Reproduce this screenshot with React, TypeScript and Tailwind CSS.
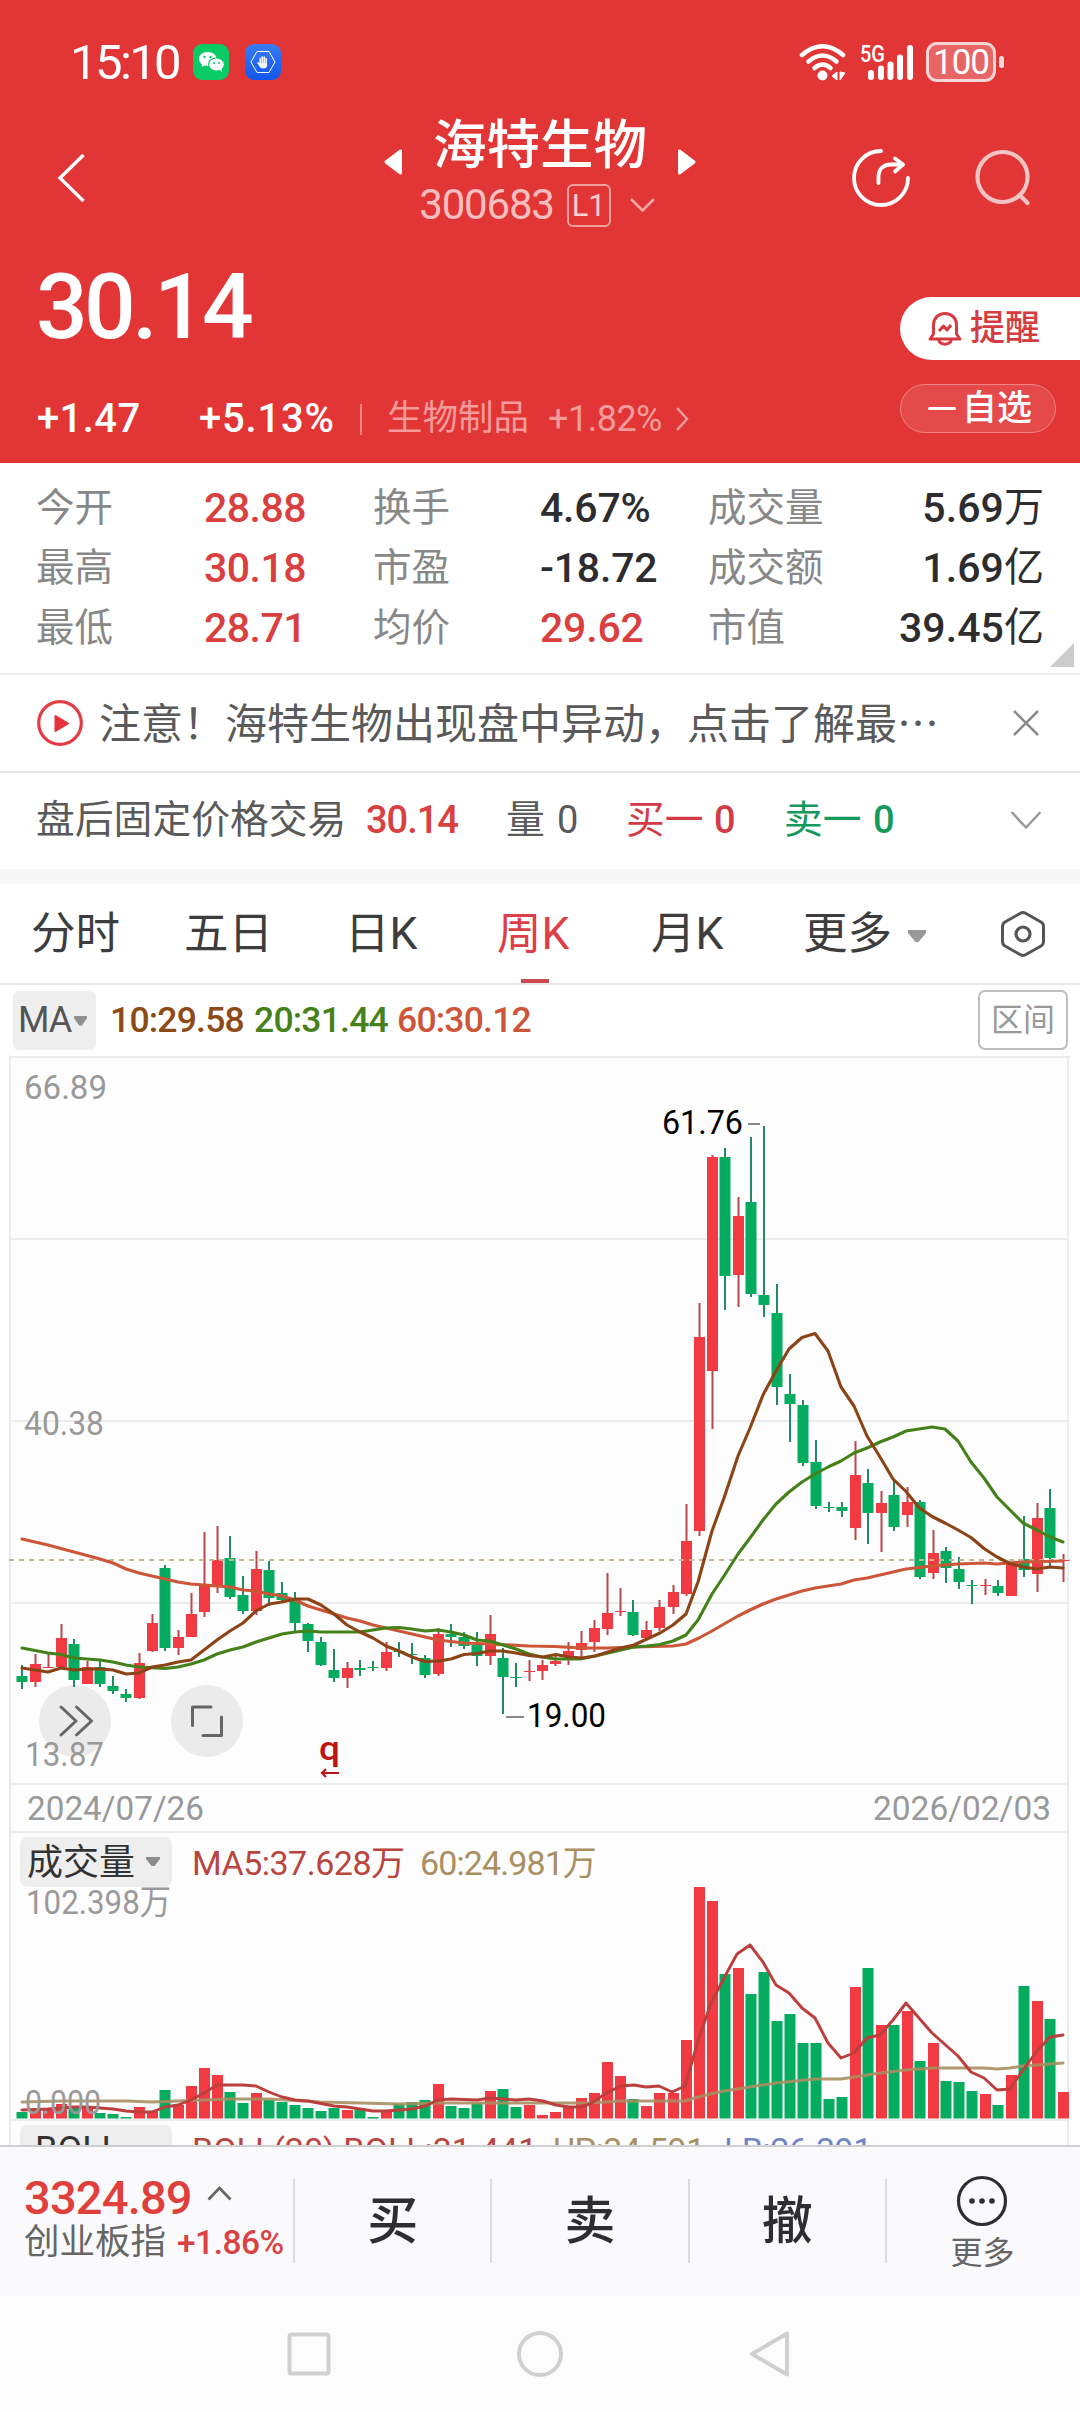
import type { ReactNode } from "react";

type Color = "r" | "g";

// [color, high, body top, body bottom, low, volume top]
type Candle = [Color, number, number, number, number, number];

const CANDLES: Candle[] = [
  ["g", 1665, 1676, 1682, 1689, 2112],
  ["r", 1654, 1664, 1682, 1687, 2109],
  ["r", 1654, 1667, 1668, 1668, 2109],
  ["r", 1624, 1638, 1667, 1669, 2104],
  ["g", 1639, 1644, 1680, 1687, 2108],
  ["r", 1661, 1667, 1684, 1684, 2108],
  ["g", 1661, 1667, 1684, 1687, 2113],
  ["g", 1676, 1686, 1691, 1694, 2114],
  ["g", 1689, 1694, 1698, 1702, 2117],
  ["r", 1653, 1663, 1698, 1699, 2107],
  ["r", 1614, 1623, 1651, 1652, 2111],
  ["g", 1565, 1568, 1648, 1651, 2090],
  ["r", 1630, 1637, 1648, 1655, 2105],
  ["r", 1593, 1614, 1637, 1637, 2086],
  ["r", 1532, 1584, 1612, 1617, 2068],
  ["r", 1526, 1560, 1587, 1593, 2075],
  ["g", 1536, 1558, 1597, 1599, 2092],
  ["g", 1576, 1595, 1611, 1614, 2103],
  ["r", 1551, 1569, 1611, 1615, 2093],
  ["g", 1561, 1570, 1598, 1606, 2100],
  ["g", 1582, 1593, 1600, 1602, 2102],
  ["g", 1592, 1600, 1623, 1631, 2105],
  ["g", 1623, 1624, 1641, 1652, 2108],
  ["g", 1637, 1642, 1665, 1666, 2111],
  ["g", 1649, 1670, 1678, 1682, 2108],
  ["r", 1662, 1668, 1678, 1688, 2110],
  ["g", 1660, 1668, 1670, 1676, 2110],
  ["g", 1661, 1667, 1668, 1671, 2117],
  ["r", 1642, 1652, 1668, 1671, 2111],
  ["g", 1642, 1651, 1652, 1657, 2104],
  ["g", 1643, 1654, 1655, 1664, 2102],
  ["g", 1655, 1658, 1675, 1678, 2100],
  ["r", 1628, 1634, 1674, 1676, 2084],
  ["g", 1624, 1634, 1637, 1647, 2106],
  ["g", 1632, 1637, 1646, 1649, 2108],
  ["g", 1632, 1645, 1656, 1666, 2103],
  ["r", 1615, 1634, 1656, 1665, 2091],
  ["g", 1648, 1658, 1677, 1714, 2089],
  ["g", 1663, 1677, 1678, 1687, 2107],
  ["r", 1660, 1671, 1672, 1681, 2105],
  ["r", 1660, 1665, 1671, 1680, 2115],
  ["r", 1654, 1661, 1664, 1666, 2112],
  ["r", 1642, 1651, 1657, 1665, 2107],
  ["r", 1631, 1643, 1650, 1658, 2098],
  ["r", 1620, 1628, 1642, 1652, 2093],
  ["r", 1573, 1613, 1629, 1635, 2062],
  ["r", 1588, 1611, 1612, 1616, 2076],
  ["g", 1600, 1612, 1635, 1636, 2099],
  ["r", 1621, 1630, 1638, 1640, 2106],
  ["r", 1600, 1607, 1628, 1631, 2093],
  ["r", 1585, 1592, 1607, 1614, 2093],
  ["r", 1504, 1541, 1594, 1596, 2040],
  ["r", 1303, 1337, 1531, 1536, 1887],
  ["r", 1155, 1157, 1371, 1429, 1901],
  ["g", 1148, 1157, 1276, 1310, 1974],
  ["r", 1197, 1216, 1275, 1307, 1968],
  ["g", 1137, 1202, 1294, 1297, 1994],
  ["g", 1126, 1295, 1305, 1317, 1972],
  ["g", 1284, 1313, 1387, 1405, 2021],
  ["g", 1374, 1394, 1404, 1442, 2014],
  ["g", 1400, 1405, 1463, 1466, 2043],
  ["g", 1440, 1462, 1506, 1509, 2043],
  ["g", 1502, 1507, 1508, 1512, 2099],
  ["g", 1502, 1507, 1511, 1517, 2097],
  ["r", 1441, 1475, 1528, 1540, 1987],
  ["g", 1469, 1483, 1513, 1544, 1968],
  ["r", 1491, 1503, 1513, 1552, 2025],
  ["g", 1481, 1495, 1527, 1531, 2025],
  ["r", 1487, 1502, 1515, 1527, 2011],
  ["g", 1500, 1502, 1577, 1579, 2061],
  ["r", 1530, 1553, 1573, 1579, 2043],
  ["g", 1547, 1551, 1568, 1583, 2081],
  ["g", 1557, 1569, 1582, 1589, 2082],
  ["g", 1580, 1585, 1586, 1604, 2091],
  ["r", 1579, 1585, 1586, 1595, 2094],
  ["g", 1580, 1586, 1593, 1596, 2105],
  ["r", 1563, 1563, 1596, 1596, 2075],
  ["g", 1516, 1559, 1570, 1577, 1986],
  ["r", 1503, 1518, 1574, 1592, 2001],
  ["g", 1489, 1508, 1558, 1567, 2019],
  ["r", 1554, 1560, 1561, 1582, 2092],
];

const MA10 =
  "22,1668 35,1670 48,1672 61,1668 74,1670 87,1669 100,1669 113,1670 126,1674 139,1673 152,1667 165,1665 178,1662 191,1660 204,1650 217,1640 230,1631 243,1623 256,1611 269,1604 282,1602 295,1599 308,1599 321,1605 334,1614 347,1625 360,1632 373,1638 386,1646 399,1651 412,1657 425,1661.5 439,1661 451,1659 464,1654.5 477,1653.5 490,1651 503,1651 516,1653 529,1655.5 543,1657 556,1654.5 569,1657 582,1658 595,1656 608,1652 621,1648 634,1645 647,1639 660,1633 673,1625 686,1614 698,1582 712,1531 724,1498 738,1456 750,1428 763,1395 776,1371 789,1349 802,1337.5 815,1333.5 828,1351 841,1387 854,1406 867,1436 880,1457 893,1479 906,1491.5 919,1507.5 932,1516.5 945,1523 958,1530 971,1537.5 984,1548.5 997,1557 1010,1563.5 1023,1567 1037,1569 1050,1567 1063,1568";
const MA20 =
  "22,1648 35,1650.5 48,1653 61,1654.5 74,1658 100,1660 113,1662 126,1665 139,1667 165,1668.5 178,1667 191,1664 204,1660 217,1654 230,1650 243,1647 256,1642 269,1638 282,1634 295,1632 308,1631 321,1632 360,1632 373,1630 386,1628 399,1627.5 412,1629 425,1631 438,1630 451,1632 464,1635 477,1640 490,1641 503,1645 516,1649 529,1654 542,1657 555,1659 580,1659 595,1656 608,1653 621,1650 634,1647 647,1646 660,1644.5 673,1641 686,1635 698,1620 712,1594 724,1576 738,1554 750,1538 763,1520 776,1504 789,1492 802,1482 815,1474 828,1467 841,1461 854,1453 867,1448 880,1442 893,1437 906,1431 932,1427 945,1429 958,1441 971,1462 984,1478 997,1497 1010,1510 1023,1523 1037,1530 1050,1537 1063,1542";
const MA60 =
  "22,1539 48,1545 74,1552 100,1559 113,1563 126,1569 139,1573 152,1576 165,1579 178,1582 191,1584 217,1586 230,1587 243,1590 256,1591 269,1594 282,1596 295,1600 308,1606 321,1610 334,1614 347,1618 360,1621 373,1625 386,1628 412,1634 438,1640 464,1643 490,1644 529,1646 555,1646.5 582,1648 608,1648 634,1647 673,1646 686,1644 699,1638 712,1631 724,1624 738,1616 750,1610 763,1604 776,1599 802,1591 815,1588 841,1584 854,1580 867,1578 906,1569 932,1566 958,1564 984,1563 997,1564 1023,1562 1063,1561";
const VOL_MA5 =
  "22,2110 48,2109 74,2107 87,2107 100,2108 113,2109 126,2111 139,2112 152,2112 165,2107 178,2105 191,2100 204,2093 217,2085 243,2085 256,2086 269,2092 282,2097 295,2100 308,2101 334,2106 347,2107 373,2111 386,2111 412,2109 425,2106 438,2100 451,2099 477,2100 490,2098 503,2099 516,2100 529,2099 543,2101 556,2105 569,2107 580,2107 590,2104 608,2092 621,2086 634,2085 646,2087 659,2086 672,2092 685,2086 698,2041 711,2003 724,1978 737,1954 750,1945 763,1962 776,1985 789,1993 802,2008 815,2018 828,2043 841,2058 854,2053 867,2038 880,2035 893,2020 906,2003 932,2033 958,2056 971,2072 984,2078 997,2090 1010,2089 1023,2070 1037,2051 1050,2037 1063,2035";
const VOL_MA60 =
  "22,2102 61,2101 126,2101 152,2102 178,2101 204,2100 230,2099 269,2099 320,2102 400,2104 440,2103 590,2103 620,2101 660,2101 685,2101 698,2097 711,2094 724,2091 750,2087 776,2083 815,2079 841,2079 867,2075 880,2073 906,2070 932,2068 984,2068 997,2069 1010,2068 1023,2066 1063,2063";

const candleX = (i: number, c: Color) => Math.round(22 + i * 13.01) + (c === "r" ? 0.5 : 0);
const bodyFill = (c: Color) => (c === "r" ? "#f23a43" : "#05ab5f");
const wickFill = (c: Color) => (c === "r" ? "#b9484c" : "#238a61");

interface LabelProps {
  x: number;
  y: number;
  w: number;
  size?: number;
  fill?: string;
  weight?: number;
  children: string;
}

function Label({ x, y, w, size = 34, fill = "#999", weight = 400, children }: LabelProps) {
  return (
    <text x={x} y={y} fontSize={size} fill={fill} fontWeight={weight} textLength={w} lengthAdjust="spacingAndGlyphs">
      {children}
    </text>
  );
}

function StatusBar() {
  return (
    <div className="flex h-[124px] items-center pl-[70px] text-white">
      <span className="w-[123px] text-[49px] leading-none tracking-[-2.6px]">15:10</span>
      <svg width="36" height="36" viewBox="0 0 36 36">
        <rect width="36" height="36" rx="9" fill="#08cb66" />
        <path d="M14.5 8C9.500 8 6 11.200 6 15c0 2.200 1.200 4 3 5.300L8.500 23l3-1.600c1 .3 2 .4 3 .4h.8c-1-4.800 3-8.500 8-8.400C22.500 10.200 19 8 14.500 8z" fill="#fff" />
        <ellipse cx="23.500" cy="20.500" rx="7.300" ry="6" fill="#fff" />
        <path d="M26 25l3 3-.5-4z" fill="#fff" />
        <g fill="#08cb66">
          <circle cx="11.500" cy="13" r="1.200" />
          <circle cx="17.500" cy="13" r="1.200" />
          <circle cx="21" cy="19" r="1" />
          <circle cx="26" cy="19" r="1" />
        </g>
      </svg>
      <svg className="ml-4" width="36" height="36" viewBox="0 0 36 36">
        <defs>
          <linearGradient id="guard" x1="0" y1="0" x2="0" y2="1">
            <stop offset="0" stopColor="#3b7bf2" />
            <stop offset="1" stopColor="#1257ec" />
          </linearGradient>
        </defs>
        <rect width="36" height="36" rx="9" fill="url(#guard)" />
        <path d="M12 7.500h12L30 18l-6 10.500H12L6 18z" fill="none" stroke="#fff" strokeWidth="1" />
        <path d="M15.200 14.500v6M17.200 13v7M19.200 13v7M21.200 14.500v6" stroke="#fff" strokeWidth="1.500" strokeLinecap="round" />
        <path d="M12 18.700l1.500-.5 1.500 1h7v2.300c0 1.500-1 2.700-2.300 2.700h-2.600c-1 0-1.800-.6-2.300-1.500z" fill="#fff" />
      </svg>

      <svg className="ml-[518px]" width="48" height="37" viewBox="0 0 48 37">
        <g fill="none" stroke="#fff" strokeWidth="4.500" strokeLinecap="round">
          <path d="M3 11Q23.500-6.500 44 11" />
          <path d="M9.500 17.500Q23.500 5.500 37.500 17.500" />
          <path d="M15.500 24Q23.500 17 31.500 24" />
        </g>
        <circle cx="23.500" cy="31.500" r="5" fill="#fff" />
        <path d="M38 28v8l-5-4zM41 36v-8l5 1z" fill="#fff" stroke="#fff" strokeWidth="1" />
      </svg>
      <svg className="ml-3 overflow-visible" width="56" height="37" viewBox="0 0 56 37">
        <text x="1" y="17.500" fontSize="24" fontWeight="500" fill="#fff" textLength="25" lengthAdjust="spacingAndGlyphs">
          5G
        </text>
        <g stroke="#fff" strokeWidth="6" strokeLinecap="round">
          <path d="M12 29v4M22 24.500v8.500M31.500 20.500v12.500M41 13.500v19.500M51 4v29" />
        </g>
      </svg>
      <div className="ml-[11px] flex h-[40px] w-[70px] items-center justify-center rounded-[11px] border-[3px] border-[#f9d6d6] bg-[#e86565] text-[35px] leading-none tracking-[-1px]">
        100
      </div>
      <div className="ml-[3px] h-3 w-[5px] rounded-full bg-[#fbdada]" />
    </div>
  );
}

function TitleBar() {
  return (
    <div className="flex h-[122px] text-white">
      <svg className="mt-[29px] ml-[57px]" width="30" height="50" viewBox="0 0 30 50">
        <path d="M26.500 2L3 25l23.500 23" fill="none" stroke="#fff" strokeWidth="3.400" />
      </svg>
      <svg className="mt-6 ml-[296px]" width="20" height="28" viewBox="0 0 20 28">
        <path d="M17.500 3v22L3 14z" fill="#fff" stroke="#fff" strokeWidth="3" strokeLinejoin="round" />
      </svg>
      <div className="flex w-[274px] flex-col items-center">
        <div className="mt-[-5px] h-[60px] text-[53.500px] leading-[54px] font-medium whitespace-nowrap">海特生物</div>
        <div className="mt-[4px] flex h-[44px] items-center">
          <span className="ml-[-5px] text-[42px] leading-none tracking-[-1.2px] text-[#f9bfbf]">300683</span>
          <span className="ml-[13px] flex h-[43px] w-[44px] items-center justify-center rounded-[6px] border-2 border-[#f4a0a0] text-[31px] leading-none text-[#fbd0d0]">
            L1
          </span>
          <svg className="ml-[18px]" width="27" height="16" viewBox="0 0 27 16">
            <path d="M2 2l11.500 11.500L25 2" fill="none" stroke="#f5a9a9" strokeWidth="2.500" />
          </svg>
        </div>
      </div>
      <svg className="mt-6" width="20" height="28" viewBox="0 0 20 28">
        <path d="M2.500 3v22L17 14z" fill="#fff" stroke="#fff" strokeWidth="3" strokeLinejoin="round" />
      </svg>
      <svg className="mt-6 ml-[153px]" width="60" height="60" viewBox="0 0 60 60">
        <g fill="none" stroke="#fff" strokeWidth="3.800" strokeLinecap="round" strokeLinejoin="round">
          <path d="M31 3A27 27 0 1 0 58 30" />
          <path d="M28.500 35v-6c0-8 5-12.500 12-12.500h12" />
          <path d="M45 10.500l8 6-8 7" />
        </g>
      </svg>
      <svg className="mt-6 ml-[63px]" width="60" height="60" viewBox="0 0 60 60">
        <circle cx="29.500" cy="29" r="25" fill="none" stroke="#f4c3c3" strokeWidth="4.200" />
        <path d="M46.500 47l8 8" stroke="#f4c3c3" strokeWidth="4.200" strokeLinecap="round" />
      </svg>
    </div>
  );
}

function Quote() {
  return (
    <div className="flex h-[217px] justify-between text-white">
      <div>
        <div className="mt-[11px] ml-[36px] h-[110px] text-[91px] leading-[100px] font-medium tracking-[-3.6px]">30.14</div>
        <div className="mt-[31px] flex h-[42px] items-center leading-none whitespace-nowrap">
          <span className="ml-[37px] w-[162px] text-[40px] font-medium tracking-[0.4px]">+1.47</span>
          <span className="w-[161px] text-[40px] font-medium tracking-[0.8px]">+5.13%</span>
          <span className="h-[31px] w-[2px] bg-[#ef8585]" />
          <span className="ml-[25px] w-[161px] text-[35.500px] text-[#f49b9b]">生物制品</span>
          <span className="w-[127px] text-[36px] tracking-[-0.5px] text-[#f49b9b]">+1.82%</span>
          <svg width="14" height="26" viewBox="0 0 14 26">
            <path d="M2 2l10 11L2 24" fill="none" stroke="#f49b9b" strokeWidth="2.500" />
          </svg>
        </div>
      </div>
      <div className="w-[180px]">
        <div className="mt-[51px] flex h-[63px] items-center rounded-l-full bg-white pl-[28px] text-[#d43c40]">
          <svg width="34" height="36" viewBox="0 0 34 36">
            <g fill="none" stroke="#d43c40" strokeWidth="3" strokeLinejoin="round">
              <path d="M5.500 23V14C5.500 7 10.500 2.500 17 2.500S28.500 7 28.500 14v9l3.500 5H2z" />
              <path d="M10.500 29c2 5.500 11 5.500 13 0" />
              <path d="M11 20l4.500-5 3.500 4 4-5" />
            </g>
          </svg>
          <span className="ml-[8px] text-[35px] leading-none font-medium">提醒</span>
        </div>
        <div className="mt-6 flex h-[49px] w-[156px] items-center rounded-full border-[1.500px] border-[#f28484] bg-[#e54a4b] pl-[27px]">
          <span className="h-[3px] w-7 rounded bg-white" />
          <span className="ml-[6px] text-[35px] leading-none font-medium">自选</span>
        </div>
      </div>
    </div>
  );
}

const STATS = [
  ["今开", "28.88", "换手", "4.67%", "成交量", "5.69万"],
  ["最高", "30.18", "市盈", "-18.72", "成交额", "1.69亿"],
  ["最低", "28.71", "均价", "29.62", "市值", "39.45亿"],
];

function Stats() {
  return (
    <div className="relative h-[212px] border-b-2 border-[#ebebeb] pt-[15px]">
      {STATS.map((row, i) => (
        <div key={row[0]} className="flex h-[60px] items-center pr-[36px] pl-[36px] text-[38.500px] leading-none whitespace-nowrap text-[#888]">
          <span className="w-[168px]">{row[0]}</span>
          <span className="w-[169px] text-[41px] font-medium tracking-[-0.5px] text-[#d9403f]">{row[1]}</span>
          <span className="w-[167px]">{row[2]}</span>
          <span className={`w-[168px] text-[41px] font-medium tracking-[-0.2px] ${i === 2 ? "text-[#d9403f]" : "text-[#2d2d2f]"}`}>
            {row[3]}
          </span>
          <span>{row[4]}</span>
          <span className="ml-auto flex items-center text-[#2d2d2f]">
            <span className="text-[41px] font-medium tracking-[0.1px]">{row[5].slice(0, -1)}</span>
            <span className="text-[40px]">{row[5].slice(-1)}</span>
          </span>
        </div>
      ))}
      <svg className="absolute right-[6px] bottom-[6px]" width="24" height="24" viewBox="0 0 24 24">
        <path d="M24 0v24H0z" fill="#ccc" />
      </svg>
    </div>
  );
}

function Notice() {
  return (
    <div className="flex h-[98px] items-center border-b-2 border-[#e6e6e6] pl-[37px]">
      <svg width="46" height="46" viewBox="0 0 46 46">
        <circle cx="23" cy="23" r="21.300" fill="none" stroke="#e23c45" strokeWidth="3.200" />
        <path d="M18.500 16v15l12.500-7.500z" fill="#e8333d" stroke="#e8333d" strokeWidth="2" strokeLinejoin="round" />
      </svg>
      <p className="mt-[-5px] ml-[16px] w-[914px] font-['Noto_Sans_CJK_SC',sans-serif] text-[42px] leading-none whitespace-nowrap text-[#5a5a5a]">
        注意！海特生物出现盘中异动，点击了解最…
      </p>
      <svg width="26" height="26" viewBox="0 0 26 26">
        <path d="M1 1l24 24M25 1L1 25" stroke="#8a8a8a" strokeWidth="2.500" />
      </svg>
    </div>
  );
}

function AfterHours() {
  return (
    <div className="flex h-[96px] items-center pb-[2px] pl-[36px] text-[38.800px] leading-none whitespace-nowrap text-[#5a5a5a]">
      <span className="w-[330px]">盘后固定价格交易</span>
      <span className="w-[140px] text-[38px] font-medium tracking-[-1px] text-[#d9403f]">30.14</span>
      <span className="w-[51px]">量</span>
      <span className="w-[69px] text-[38px]">0</span>
      <span className="w-[88px] text-[#d23c46]">买一</span>
      <span className="w-[70px] text-[38px] font-medium text-[#d23c46]">0</span>
      <span className="w-[89px] text-[#15995c]">卖一</span>
      <span className="w-[137px] text-[38px] font-medium text-[#15995c]">0</span>
      <svg width="32" height="20" viewBox="0 0 32 20">
        <path d="M1.500 2L16 17.500 30.500 2" fill="none" stroke="#999" strokeWidth="2.500" />
      </svg>
    </div>
  );
}

function Tabs() {
  return (
    <div className="flex h-[101px] items-center border-b-2 border-[#e8e8e8] pl-[31px] text-[44.500px] leading-none whitespace-nowrap text-[#3d3d3d]">
      <span className="w-[153px] pt-[2px]">分时</span>
      <span className="w-[161px] pt-[2px]">五日</span>
      <span className="w-[152px] pt-[2px]">日K</span>
      <span className="relative w-[154px] pt-[2px] text-[#dc3f48]">
        周K
        <span className="absolute top-[69px] left-[24px] h-[4px] w-[28px] bg-[#cb4a50]" />
      </span>
      <span className="w-[152px] pt-[2px]">月K</span>
      <span className="pt-[2px]">更多</span>
      <svg className="mt-1 ml-[14px]" width="22" height="14" viewBox="0 0 22 14">
        <path d="M2 1h18v3l-7.500 9h-3L2 4z" fill="#999" />
      </svg>
      <svg className="ml-[72px]" width="46" height="48" viewBox="0 0 46 48">
        <path d="M20.500 3.200Q23 1.800 25.500 3.200L41 12q2.500 1.500 2.500 4.500v15q0 3-2.500 4.500L25.500 44.800Q23 46.200 20.500 44.800L5 36q-2.500-1.500-2.500-4.500v-15Q2.500 13.500 5 12z" fill="none" stroke="#555" strokeWidth="3" />
        <circle cx="23" cy="24" r="7" fill="none" stroke="#555" strokeWidth="3.200" />
      </svg>
    </div>
  );
}

function MaBar() {
  return (
    <div className="flex h-[71px] items-center pb-[1px] pl-[13px] text-[35.500px] leading-none font-medium whitespace-nowrap">
      <div className="flex h-[59px] w-[83px] items-center rounded-[6px] bg-[#eee] pl-[5px] text-[36px] font-normal tracking-[-1px] text-[#555]">
        MA
        <svg className="mt-[2px] ml-[3px]" width="13" height="10" viewBox="0 0 13 10">
          <path d="M0 0h13v2L8 9.500H5L0 2z" fill="#909090" />
        </svg>
      </div>
      <span className="ml-[14px] w-[144px] pt-[2px] tracking-[-0.8px] text-[#8d4a16]">10:29.58</span>
      <span className="w-[143px] pt-[2px] tracking-[-0.8px] text-[#46801a]">20:31.44</span>
      <span className="pt-[2px] tracking-[-0.8px] text-[#cd5538]">60:30.12</span>
      <span className="mr-[12px] ml-auto flex h-[60px] w-[90px] items-center justify-center rounded-[7px] border-2 border-[#bdbdbd] text-[32px] font-normal text-[#999]">
        区间
      </span>
    </div>
  );
}

function PriceChart() {
  return (
    <svg className="block" width="1080" height="777" viewBox="0 1056 1080 777">
      <rect x="10" y="1057" width="1059" height="776" fill="#fdfdfd" />
      <g stroke="#ebebeb" strokeWidth="2">
        <path d="M9 1057H1070M10 1239H1069M10 1421H1069M10 1603H1069M10 1784H1069M10 1832H1069M10 1057V1833M1068 1057V1833" />
      </g>
      <circle cx="75" cy="1721" r="36" fill="#ebebeb" />
      <circle cx="207" cy="1721" r="36" fill="#ebebeb" />
      {CANDLES.map(([c, high, top, bottom, low], i) => {
        const x = candleX(i, c);
        return (
          <g key={i}>
            <rect x={x - 1} y={high} width="2" height={low - high} fill={wickFill(c)} />
            <rect x={x - 5.5} y={top} width="11" height={Math.max(bottom - top, 1)} fill={bodyFill(c)} />
          </g>
        );
      })}
      <path d="M9 1560H1070" stroke="#c4b594" strokeWidth="2" strokeDasharray="5 5" />
      <g fill="none" strokeWidth="3.100" strokeLinejoin="round" strokeLinecap="round">
        <polyline points={MA60} stroke="#cc5638" />
        <polyline points={MA20} stroke="#44811a" />
        <polyline points={MA10} stroke="#8c4416" />
      </g>
      <g fill="none" stroke="#666" strokeWidth="3" strokeLinecap="round" strokeLinejoin="round">
        <path d="M61 1707l15 14-15 14M76.500 1707l15 14-15 14" />
        <path d="M192.500 1725.500V1707H211M221.500 1717v18.500H203" />
      </g>
      <Label x={24} y={1099} w={83}>66.89</Label>
      <Label x={24} y={1435} w={80}>40.38</Label>
      <Label x={25} y={1766} w={79}>13.87</Label>
      <Label x={27} y={1820} w={177}>2024/07/26</Label>
      <Label x={873} y={1820} w={178}>2026/02/03</Label>
      <Label x={662} y={1134} w={81} size={33} fill="#000">61.76</Label>
      <Label x={527} y={1727} w={79} size={33} fill="#000">19.00</Label>
      <path d="M748 1124h12M506 1717h18" stroke="#888" strokeWidth="2" />
      <Label x={319} y={1760} w={21} size={34} fill="#c01414" weight={500}>q</Label>
      <path d="M339 1773H322M326 1769l-4 4 4 4" fill="none" stroke="#c01414" strokeWidth="2.200" />
    </svg>
  );
}

function IndicatorName({ children }: { children: ReactNode }) {
  return <div className="flex h-[50px] w-[152px] items-center rounded-[8px] bg-[#eee] pl-[7px] text-[36px] text-[#333]">{children}</div>;
}

function VolumeChart() {
  return (
    <div className="mr-[11px] ml-[9px] h-[288px] border-x-2 border-[#ebebeb] bg-[#fdfdfd]">
      <div className="flex h-[54px] items-center pt-[4px] pl-[9px] text-[34px] leading-none whitespace-nowrap">
        <IndicatorName>
          <span className="pt-[2px]">成交量</span>
          <svg className="ml-[11px]" width="14" height="10" viewBox="0 0 14 10">
            <path d="M0 0h14v2L8.500 9h-3L0 2z" fill="#8c8c8c" />
          </svg>
        </IndicatorName>
        <span className="ml-[20px] w-[228px] pt-[2px] tracking-[-0.5px] text-[#b9453f]">MA5:37.628万</span>
        <span className="pt-[2px] tracking-[-0.9px] text-[#a98f62]">60:24.981万</span>
      </div>
      <svg className="ml-[-11px] block overflow-visible" width="1080" height="234" viewBox="0 1887 1080 234">
        <path d="M10 2120H1069" stroke="#e9efec" strokeWidth="2" />
        {CANDLES.map(([c, , , , , top], i) => (
          <rect key={i} x={candleX(i, c) - 5.5} y={top} width="11" height={2118.5 - top} fill={bodyFill(c)} />
        ))}
        <g fill="none" strokeLinejoin="round" strokeLinecap="round">
          <polyline points={VOL_MA60} stroke="#a98f62" strokeWidth="3" strokeOpacity="0.9" />
          <polyline points={VOL_MA5} stroke="#bb3f3d" strokeWidth="2.900" />
        </g>
        <Label x={26} y={1914} w={145}>102.398万</Label>
        <Label x={25} y={2114} w={76}>0.000</Label>
      </svg>
    </div>
  );
}

function BollRow() {
  return (
    <div className="mr-[11px] ml-[9px] h-[24px] overflow-hidden border-x-2 border-[#ebebeb] bg-[#fdfdfd]">
      <div className="flex h-[54px] pt-[4px] pl-[9px] text-[34px] leading-[50px] whitespace-nowrap">
        <IndicatorName>
          <span className="ml-[8px]">BOLL</span>
        </IndicatorName>
        <span className="ml-[20px] w-[361px] text-[#b9453f]">BOLL(20) BOLL:31.441</span>
        <span className="w-[171px] tracking-[-0.5px] text-[#a98f62]">UP:34.591</span>
        <span className="tracking-[-0.5px] text-[#6f86c4]">LB:26.391</span>
      </div>
    </div>
  );
}

function BottomBar() {
  return (
    <div className="flex h-[151px] border-t-2 border-[#d0d0d2] bg-[#fafafc] pt-[32px]">
      <div className="mt-[-6px] h-[90px] w-[293px] pl-[24px] whitespace-nowrap">
        <div className="flex h-[48px] items-center">
          <span className="text-[47px] leading-none font-medium tracking-[-0.8px] text-[#df403c]">3324.89</span>
          <svg className="mt-[-8px] ml-[15px]" width="25" height="15" viewBox="0 0 25 15">
            <path d="M1.500 13.500l11-11.500 11 11.500" fill="none" stroke="#666" strokeWidth="2.800" />
          </svg>
        </div>
        <div className="mt-[4px] flex h-[36px] items-center text-[35.500px] leading-none text-[#666]">
          创业板指
          <span className="ml-[11px] text-[33.500px] font-medium tracking-[-0.5px] text-[#d94343]">+1.86%</span>
        </div>
      </div>
      {["买", "卖", "撤"].map((action) => (
        <div
          key={action}
          className="flex h-[84px] w-[197.300px] items-center justify-center border-l-2 border-[#dcdcde] text-[51px] leading-none font-medium text-[#2e2e30]"
        >
          {action}
        </div>
      ))}
      <div className="flex h-[84px] flex-1 flex-col items-center border-l-2 border-[#dcdcde] pr-[2px]">
        <svg className="mt-[-4px] block shrink-0" width="52" height="52" viewBox="0 0 52 52">
          <circle cx="26" cy="26" r="23.500" fill="none" stroke="#2e2e30" strokeWidth="3.200" />
          <g fill="#2e2e30">
            <circle cx="16" cy="26" r="2.800" />
            <circle cx="26" cy="26" r="2.800" />
            <circle cx="36" cy="26" r="2.800" />
          </g>
        </svg>
        <span className="mt-[10px] text-[32px] leading-none text-[#666]">更多</span>
      </div>
    </div>
  );
}

function NavBar() {
  return (
    <div className="flex h-[116px] items-center bg-[#fcfcfc] pl-[287px]">
      <svg width="44" height="44" viewBox="0 0 44 44">
        <rect x="2.500" y="2.500" width="39" height="39" rx="2" fill="none" stroke="#d0d0d0" strokeWidth="4" />
      </svg>
      <svg className="ml-[185px]" width="48" height="48" viewBox="0 0 48 48">
        <circle cx="24" cy="24" r="21" fill="none" stroke="#d0d0d0" strokeWidth="4" />
      </svg>
      <svg className="ml-[184px]" width="42" height="48" viewBox="0 0 42 48">
        <path d="M39 3.500v41L4 24z" fill="none" stroke="#d0d0d0" strokeWidth="4" strokeLinejoin="round" />
      </svg>
    </div>
  );
}

export default function App() {
  return (
    <div className="flex h-[2412px] w-[1080px] flex-col overflow-hidden bg-white font-[Roboto,'Noto_Sans_CJK_SC',sans-serif]">
      <header className="bg-[#e23536]">
        <StatusBar />
        <TitleBar />
        <Quote />
      </header>
      <Stats />
      <Notice />
      <AfterHours />
      <div className="h-[15px] bg-[#f7f7f7]" />
      <Tabs />
      <MaBar />
      <PriceChart />
      <VolumeChart />
      <BollRow />
      <BottomBar />
      <NavBar />
    </div>
  );
}
